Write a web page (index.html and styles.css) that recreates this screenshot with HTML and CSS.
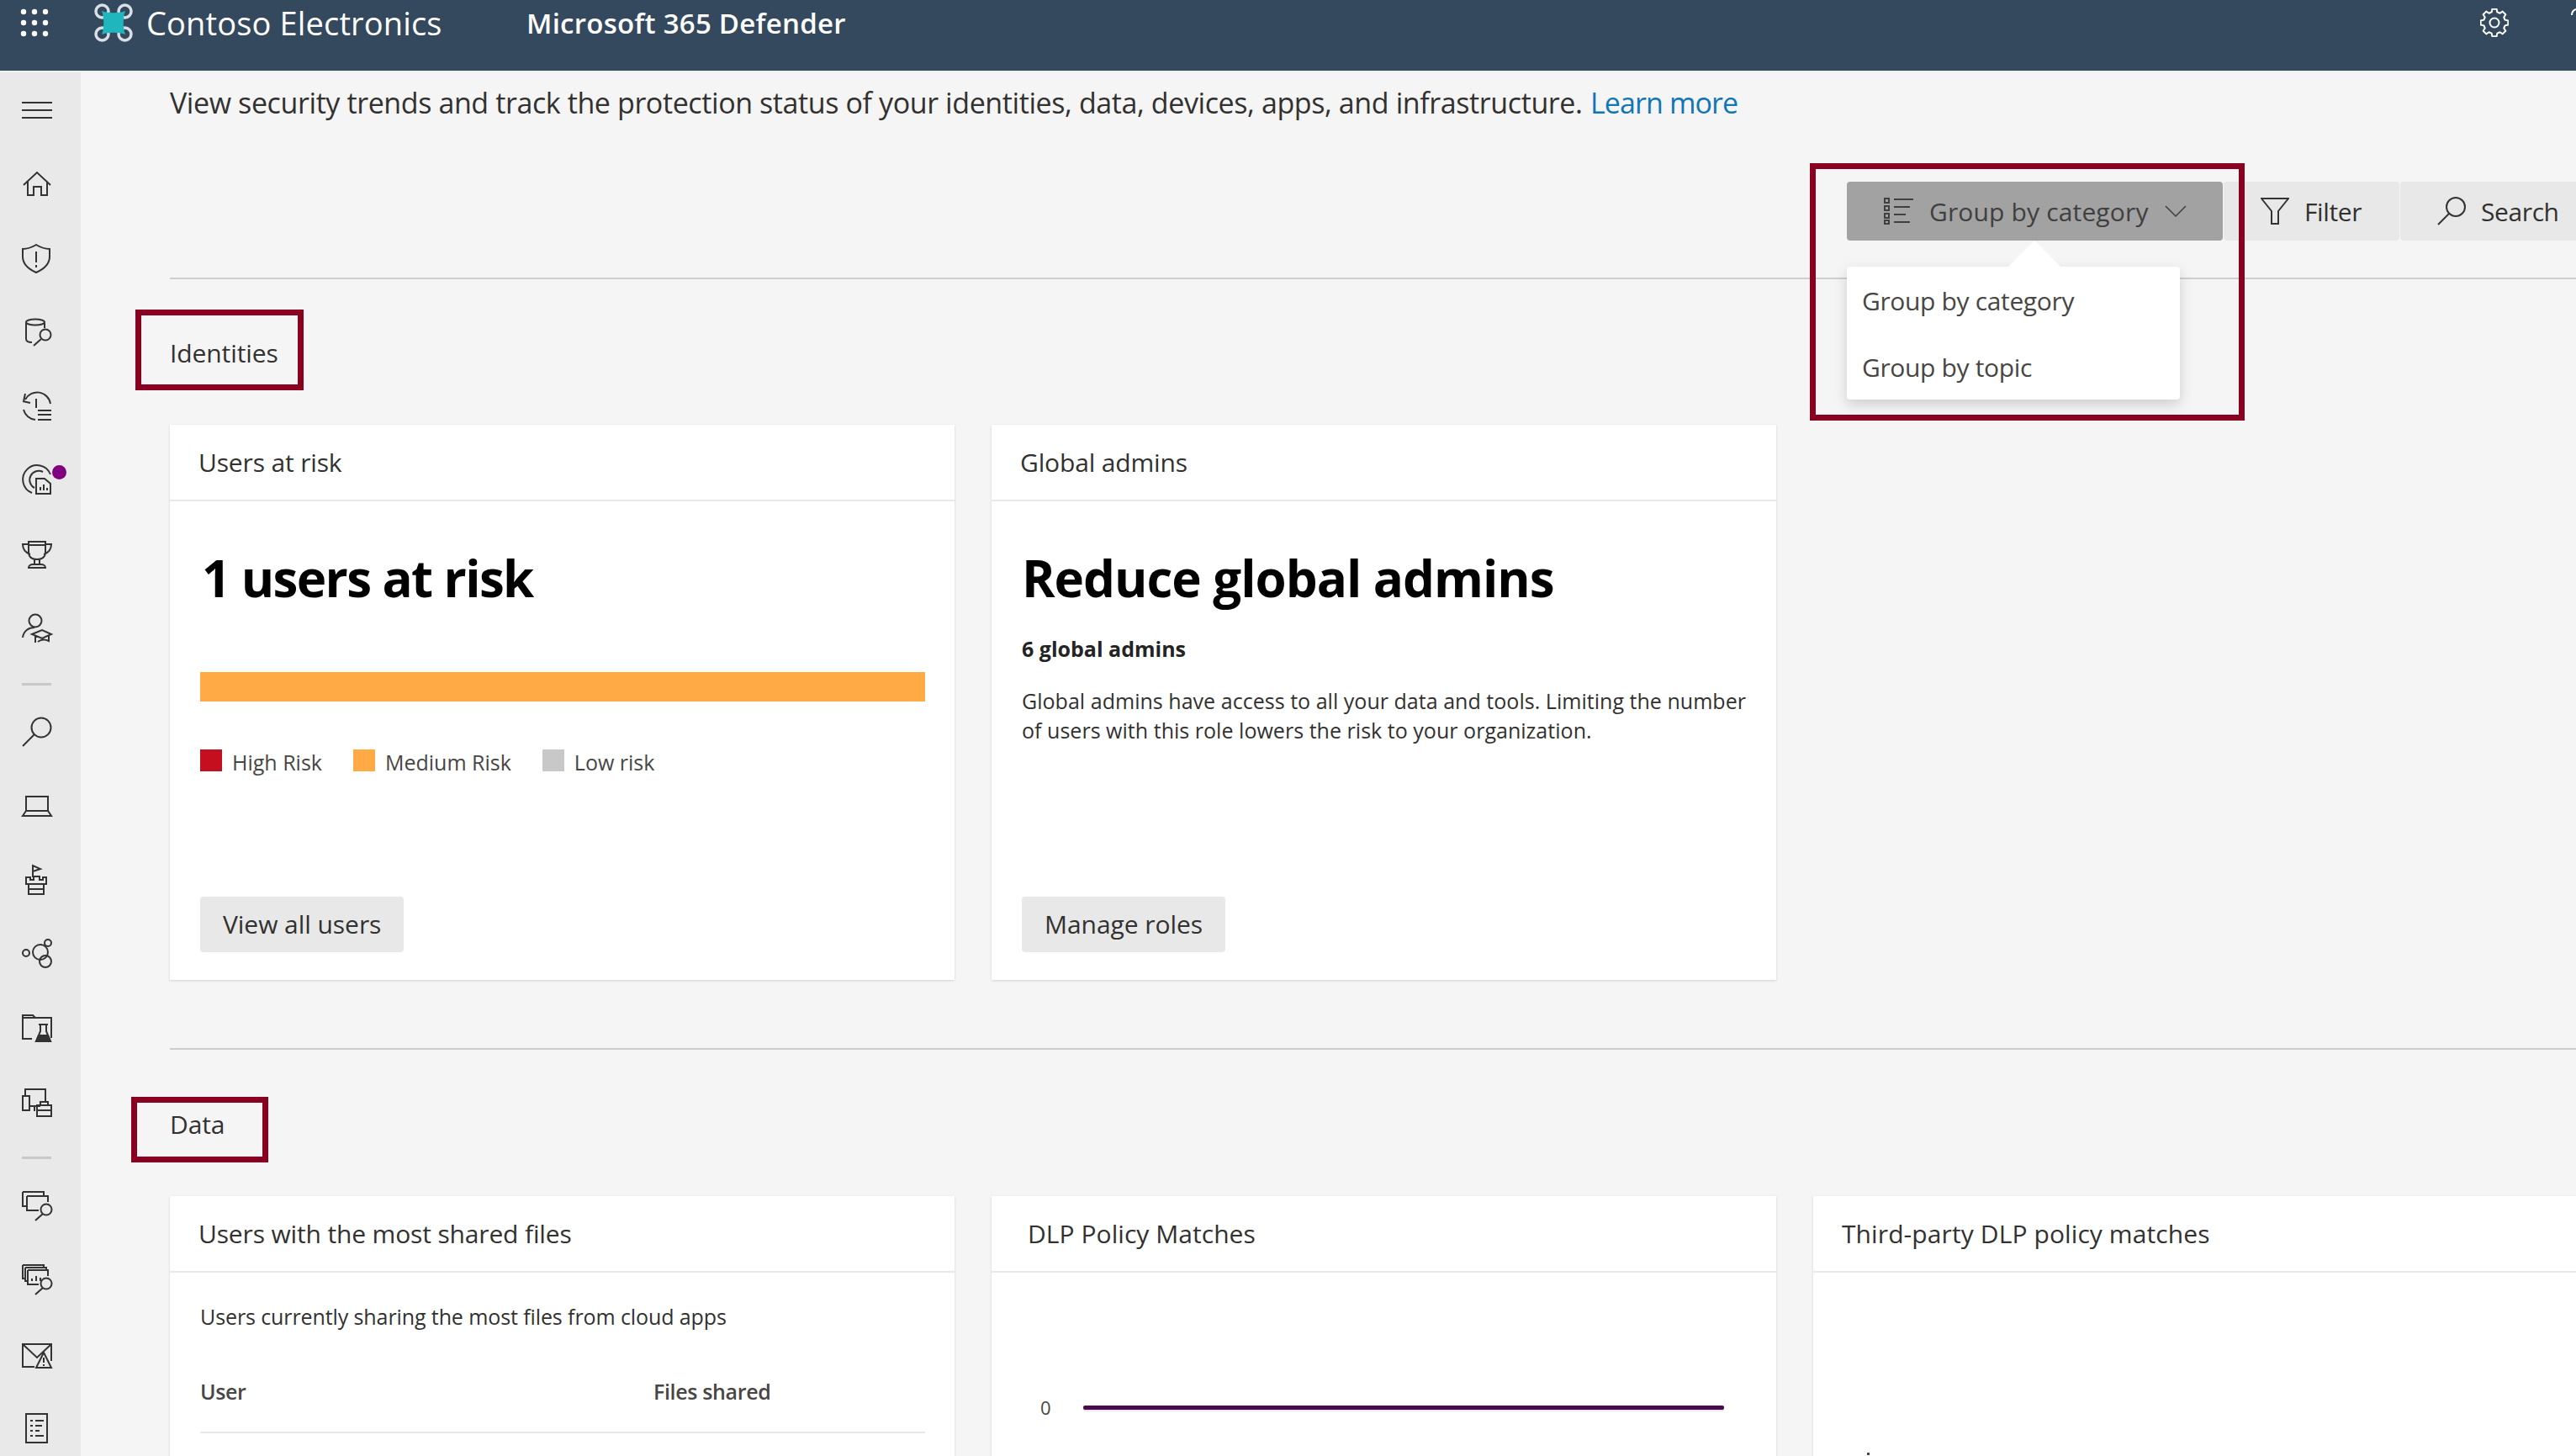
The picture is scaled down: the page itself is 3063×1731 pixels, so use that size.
FILE: index.html
```html
<!DOCTYPE html>
<html lang="en">
<head>
  <meta charset="utf-8">
  <title>Microsoft 365 Defender</title>
  <link rel="stylesheet" href="styles.css">
</head>
<body>
  <div class="topbar">
    <svg class="waffle" width="36" height="36" viewBox="0 0 36 36"><g fill="#fff"><circle cx="5" cy="5" r="3.2"/><circle cx="18" cy="5" r="3.2"/><circle cx="31" cy="5" r="3.2"/><circle cx="5" cy="18" r="3.2"/><circle cx="18" cy="18" r="3.2"/><circle cx="31" cy="18" r="3.2"/><circle cx="5" cy="31" r="3.2"/><circle cx="18" cy="31" r="3.2"/><circle cx="31" cy="31" r="3.2"/></g></svg>
    <svg class="logo" width="46" height="46" viewBox="0 0 46 46"><g fill="none" stroke="#d9dfe4" stroke-width="3.5"><circle cx="9.5" cy="9.5" r="7.5"/><circle cx="36.5" cy="9.5" r="7.5"/><circle cx="9.5" cy="36.5" r="7.5"/><circle cx="36.5" cy="36.5" r="7.5"/></g><path d="M9 9C16 12 30 12 37 9C34 16 34 30 37 37C30 34 16 34 9 37C12 30 12 16 9 9Z" fill="#1fb6bd"/></svg>
    <span class="org-name">Contoso Electronics</span>
    <span class="product-name">Microsoft 365 Defender</span>
    <svg class="gear" width="34" height="34" viewBox="0 0 34 34" fill="none" stroke="#fff" stroke-width="2" stroke-linejoin="round"><polygon points="13.64,4.44 14.42,.7 19.58,.7 20.36,4.44 23.5,5.74 26.7,3.65 30.35,7.3 28.26,10.5 29.56,13.64 33.3,14.42 33.3,19.58 29.56,20.36 28.26,23.5 30.35,26.7 26.7,30.35 23.5,28.26 20.36,29.56 19.58,33.3 14.42,33.3 13.64,29.56 10.5,28.26 7.3,30.35 3.65,26.7 5.74,23.5 4.44,20.36 .7,19.58 .7,14.42 4.44,13.64 5.74,10.5 3.65,7.3 7.3,3.65 10.5,5.74"/><circle cx="17" cy="17" r="5.5"/></svg>
    <svg class="help-edge" width="6" height="10" viewBox="0 0 6 10" fill="none" stroke="#fff" stroke-width="2"><path d="M1 8C1 4 3 2 6 1"/></svg>
  </div>

  <div class="layout">
    <nav class="sidebar">
      <a class="nav-item"><svg class="nav-icon" viewBox="0 0 36 36"><path d="M0 9H36M0 18H36M0 27H36"/></svg></a>
      <a class="nav-item"><svg class="nav-icon" viewBox="0 0 36 36"><path d="M2 19L18 4L34 19M7 15V31H14V21H23V31H30V15"/></svg></a>
      <a class="nav-item"><svg class="nav-icon" viewBox="0 0 36 36"><path d="M17 2C12 5 6 7 1 7V16C1 25 8 31 17 35C26 31 33 25 33 16V7C28 7 22 5 17 2ZM17 10V23M17 26V29"/></svg></a>
      <a class="nav-item"><svg class="nav-icon" viewBox="0 0 36 36"><ellipse cx="16" cy="6" rx="11" ry="3.5"/><path d="M5 7V26C5 29 8 30 12 30M27 7V13M23 26L14 34"/><circle cx="28" cy="21" r="6.5"/></svg></a>
      <a class="nav-item"><svg class="nav-icon" viewBox="0 0 36 36"><path d="M4 10A16 16 0 0 1 34 15M1 12L10 14M4 3L2 12M2 22A16 16 0 0 0 16 34M17 9V20M19 23H35M19 28H35M19 34H35"/></svg></a>
      <a class="nav-item"><svg class="nav-icon" viewBox="0 0 36 36"><path d="M12 33A17 17 0 1 1 34 11M15 27A10 10 0 0 1 25 8M17 16H27L34 22V34H17ZM22 30V26M26 30V23M30 30V27"/></svg><span class="badge"></span></a>
      <a class="nav-item"><svg class="nav-icon" viewBox="0 0 36 36"><path d="M8 3H28V15C28 21 24 24 18 24C12 24 8 21 8 15ZM8 6H1C1 12 4 16 10 18M28 6H35C35 12 32 16 26 18M15 24V30M21 24V30M8 34C8 32 10 30 13 30H23C26 30 28 32 28 34ZM8 7H28"/></svg></a>
      <a class="nav-item"><svg class="nav-icon" viewBox="0 0 36 36"><circle cx="16" cy="9" r="7.5"/><path d="M1 29C2 21 8 17 15 17M12 25L24 20L35 25L24 30ZM16 27V35M32 27V33C28 31 23 31 19 34"/></svg></a>
      <div class="nav-divider"></div>
      <a class="nav-item"><svg class="nav-icon" viewBox="0 0 36 36"><circle cx="23" cy="13" r="11.5"/><path d="M15 21L1 35"/></svg></a>
      <a class="nav-item"><svg class="nav-icon" viewBox="0 0 36 36"><path d="M5 24V7H31V24M5 24H31L35 30H1Z"/></svg></a>
      <a class="nav-item"><svg class="nav-icon" viewBox="0 0 36 36"><path d="M13 15V1L22 5L13 8M5 15H10V18H14V14H21V18H25V15H29V23H5ZM8 23V29M26 23V29M8 29H26V35H8Z"/></svg></a>
      <a class="nav-item"><svg class="nav-icon" viewBox="0 0 36 36"><circle cx="5" cy="17" r="4"/><circle cx="31" cy="5" r="4"/><circle cx="22" cy="16" r="9"/><circle cx="28" cy="27" r="7"/></svg></a>
      <a class="nav-item"><svg class="nav-icon" viewBox="0 0 36 36"><path d="M12 31H1V3H13L16 6H35V30M1 6H16M20 14H31M22 14V22L17 34H34L29 22V14"/><path class="nav-fill" d="M17 34L20 27H31L34 34Z"/></svg></a>
      <a class="nav-item"><svg class="nav-icon" viewBox="0 0 36 36"><path d="M4 12V3H28V18M9 23H22M15 23V29"/><rect x="1" y="11" width="8" height="17"/><rect x="18" y="22" width="17" height="13"/><path d="M22 22V18H31V22M18 28H35"/></svg></a>
      <div class="nav-divider"></div>
      <a class="nav-item"><svg class="nav-icon" viewBox="0 0 36 36"><path d="M1 2H26V7M1 2V19H6M6 7H31V14M6 7V24H20M25 28L16 36"/><circle cx="29" cy="23" r="6.5"/></svg></a>
      <a class="nav-item"><svg class="nav-icon" viewBox="0 0 36 36"><path d="M1 1H26V4M1 1V17H4M4 4H29V7M4 4V20H7M7 7H31V14M7 7V24H20M25 28L16 36M12 20V17M17 20V14M22 20V16"/><circle cx="29" cy="23" r="6.5"/></svg></a>
      <a class="nav-item"><svg class="nav-icon" viewBox="0 -3 36 36"><path d="M15 31H1V4H35V24M1 4L18 20L35 4M26 14L35 32H17ZM26 20V26M26 28V30"/></svg></a>
      <a class="nav-item"><svg class="nav-icon" viewBox="0 -1 36 36"><rect x="5" y="1" width="25" height="34"/><path d="M10 9H13M16 9H26M10 15H13M16 15H24M10 21H13M16 21H21M10 27H13M16 27H26"/></svg></a>
    </nav>

    <main class="main">
      <p class="intro">View security trends and track the protection status of your identities, data, devices, apps, and infrastructure. <a class="link">Learn more</a></p>

      <div class="toolbar">
        <div class="tool tool-active">
          <svg class="tool-icon" width="36" height="32" viewBox="0 0 36 32" fill="none" stroke="#404040" stroke-width="2"><rect x="1" y="1" width="5" height="5"/><rect x="1" y="10" width="5" height="5"/><rect x="1" y="19" width="5" height="5"/><rect x="1" y="27" width="5" height="4"/><path d="M12 2H35M12 11H31M12 20H26M12 29H31"/></svg>
          <span>Group by category</span>
          <svg class="chevron" width="26" height="14" viewBox="0 0 26 14" fill="none" stroke="#404040" stroke-width="1.5"><path d="M1 1L13 13L25 1"/></svg>
          <div class="menu">
            <div class="menu-item">Group by category</div>
            <div class="menu-item">Group by topic</div>
          </div>
          <div class="callout callout-menu"></div>
        </div>
        <div class="tool tool-filter">
          <svg class="tool-icon" width="34" height="32" viewBox="0 0 34 32" fill="none" stroke="#333" stroke-width="2"><path d="M1 1H33L21 16V31H13V16Z"/></svg>
          <span>Filter</span>
        </div>
        <div class="tool tool-search">
          <svg class="tool-icon" width="34" height="34" viewBox="0 0 34 34" fill="none" stroke="#333" stroke-width="2"><circle cx="22" cy="12" r="11"/><path d="M14 20L1 33"/></svg>
          <span>Search</span>
        </div>
      </div>
      <hr class="rule">

      <h2 class="section-title">Identities<span class="callout callout-identities"></span></h2>
      <div class="cards">
        <section class="card">
          <h3 class="card-title">Users at risk</h3>
          <div class="card-body">
            <div class="headline headline-risk">1 users at risk</div>
            <div class="risk-bar"></div>
            <div class="legend">
              <span class="legend-item"><i class="swatch swatch-high"></i>High Risk</span>
              <span class="legend-item"><i class="swatch swatch-medium"></i>Medium Risk</span>
              <span class="legend-item"><i class="swatch swatch-low"></i>Low risk</span>
            </div>
            <a class="btn">View all users</a>
          </div>
        </section>
        <section class="card">
          <h3 class="card-title">Global admins</h3>
          <div class="card-body">
            <div class="headline">Reduce global admins</div>
            <div class="subhead">6 global admins</div>
            <p class="card-text">Global admins have access to all your data and tools. Limiting the number of users with this role lowers the risk to your organization.</p>
            <a class="btn">Manage roles</a>
          </div>
        </section>
      </div>
      <hr class="rule rule-data">

      <h2 class="section-title section-data">Data<span class="callout callout-data"></span></h2>
      <div class="cards">
        <section class="card">
          <h3 class="card-title">Users with the most shared files</h3>
          <div class="card-body card-body-table">
            <p class="card-note">Users currently sharing the most files from cloud apps</p>
            <div class="table-head"><span>User</span><span>Files shared</span></div>
          </div>
        </section>
        <section class="card">
          <h3 class="card-title card-title-dlp">DLP Policy Matches</h3>
          <div class="card-body">
            <div class="chart">
              <span class="chart-label">0</span>
              <div class="chart-line"></div>
            </div>
          </div>
        </section>
        <section class="card">
          <h3 class="card-title card-title-wide">Third-party DLP policy matches</h3>
          <div class="card-body"><i class="axis-tick"></i></div>
        </section>
      </div>
    </main>
  </div>
</body>
</html>
```

FILE: styles.css
```css
* {
  box-sizing: border-box;
}

html, body {
  height: 1731px;
  margin: 0;
  overflow: hidden;
}

body {
  font-family: "Open Sans", "Noto Sans", sans-serif;
  color: #323130;
  background: #f5f5f5;
}

/* top bar */
.topbar {
  position: relative;
  display: flex;
  align-items: center;
  height: 84px;
  padding: 0 0 30px 23px;
  color: #fff;
  background: #35495e;
}

.logo {
  margin-left: 53px;
}

.org-name {
  width: 452px;
  margin-left: 16px;
  font-size: 38px;
  letter-spacing: .15px;
}

.product-name {
  font-size: 33px;
  font-weight: 600;
  letter-spacing: .25px;
}

.gear {
  margin-left: auto;
  margin-right: 80px;
}

.help-edge {
  position: absolute;
  right: 0;
  top: 10px;
}

/* side nav */
.layout {
  display: flex;
  height: 1647px;
  border-top: 2px solid #f0f0f0;
}

.sidebar {
  flex: none;
  width: 96px;
  padding-top: 1px;
  background: #e9e9e9;
}

.nav-item {
  position: relative;
  display: flex;
  align-items: center;
  height: 88px;
  padding-left: 26px;
}

.nav-icon {
  width: 36px;
  height: 36px;
  fill: none;
  stroke: #333;
  stroke-width: 2;
  overflow: visible;
}

.nav-fill {
  fill: #333;
}

.badge {
  position: absolute;
  left: 62px;
  top: 26px;
  width: 17px;
  height: 17px;
  border-radius: 50%;
  background: #800080;
}

.nav-divider {
  width: 35px;
  height: 3px;
  margin: 21px 0 11px 26px;
  background: #c8c8c8;
}

/* main column */
.main {
  flex: 1;
  min-width: 0;
  padding-left: 106px;
  overflow: hidden;
}

.intro {
  margin: 12px 0 0;
  font-size: 34px;
  line-height: 48px;
  letter-spacing: -.4px;
  white-space: nowrap;
}

.link {
  margin-left: 1px;
  letter-spacing: -.9px;
  color: #0f77b6;
}

.toolbar {
  display: flex;
  gap: 1px;
  height: 70px;
  margin: 70px -30px 0 0;
  justify-content: flex-end;
  font-size: 30px;
  letter-spacing: -.4px;
}

.tool {
  position: relative;
  display: flex;
  align-items: center;
  padding-left: 44px;
  border-radius: 4px;
  background: #e8e8e8;
}

.tool-active {
  width: 447px;
  color: #404040;
  letter-spacing: .15px;
  background: #a2a2a2;
}

.tool-filter {
  width: 209px;
}

.tool-search {
  width: 239px;
}

.tool-icon {
  margin-right: 18px;
  flex: none;
}

.chevron {
  margin-left: 19px;
}

/* dropdown */
.menu {
  position: absolute;
  left: 0;
  top: 101px;
  z-index: 2;
  width: 396px;
  height: 158px;
  padding-top: 2px;
  border-radius: 4px;
  color: #484644;
  letter-spacing: -.35px;
  background: #fff;
  box-shadow: 0 6px 16px rgba(0, 0, 0, .16);
}

.menu::before {
  content: "";
  position: absolute;
  left: 192px;
  top: -31px;
  width: 62px;
  height: 31px;
  background: #fff;
  clip-path: polygon(50% 0, 100% 100%, 0 100%);
}

.menu-item {
  height: 79px;
  padding-left: 18px;
  line-height: 78px;
}

/* annotation boxes */
.callout {
  position: absolute;
  border: 7px solid #8a0020;
}

.callout-menu {
  left: -44px;
  top: -22px;
  z-index: 3;
  width: 517px;
  height: 306px;
}

.rule {
  height: 2px;
  margin: 44px 0 0;
  border: 0;
  background: #cdcdcd;
}

.section-title {
  position: relative;
  margin: 68px 0 65px;
  font-size: 30px;
  font-weight: 400;
  line-height: 40px;
  letter-spacing: -.1px;
}

.callout-identities {
  left: -41px;
  top: -32px;
  width: 200px;
  height: 96px;
}

.rule-data {
  margin-top: 81px;
}

.section-data {
  margin-top: 69px;
}

.callout-data {
  left: -46px;
  top: -13px;
  width: 163px;
  height: 78px;
}

/* cards */
.cards {
  display: grid;
  grid-template-columns: repeat(3, 933px);
  gap: 44px;
}

.card {
  display: flex;
  flex-direction: column;
  height: 660px;
  background: #fff;
  box-shadow: 0 1px 3px rgba(0, 0, 0, .14);
}

.card-title {
  flex: none;
  height: 91px;
  margin: 0;
  padding-left: 34px;
  border-bottom: 2px solid #e8e8e8;
  font-size: 30px;
  font-weight: 400;
  line-height: 89px;
  letter-spacing: -.15px;
}

.card-title-dlp {
  padding-left: 43px;
  letter-spacing: .05px;
}

.card-title-wide {
  letter-spacing: .1px;
}

.card-body {
  position: relative;
  display: flex;
  flex: 1;
  flex-direction: column;
  align-items: flex-start;
  padding: 51px 36px 33px;
}

.headline {
  font-size: 60px;
  font-weight: 700;
  line-height: 80px;
  letter-spacing: -1px;
  color: #000;
}

.headline-risk {
  margin-left: 2px;
  letter-spacing: -1.6px;
}

.risk-bar {
  width: 862px;
  height: 35px;
  margin-top: 72px;
  background: #ffaa44;
}

.legend {
  display: flex;
  gap: 37px;
  margin-top: 57px;
  font-size: 25px;
  line-height: 30px;
  letter-spacing: 0;
  color: #484644;
}

.legend-item {
  display: flex;
  align-items: center;
}

.swatch {
  width: 26px;
  height: 26px;
  margin: -4px 12px 0 0;
}

.swatch-high {
  background: #c50f1f;
}

.swatch-medium {
  background: #ffaa44;
}

.swatch-low {
  background: #c8c8c8;
}

.btn {
  display: block;
  height: 66px;
  margin-top: auto;
  padding: 0 27px;
  border-radius: 4px;
  font-size: 30px;
  line-height: 66px;
  letter-spacing: -.05px;
  background: #e8e8e8;
}

.subhead {
  margin-top: 29px;
  font-size: 25px;
  font-weight: 700;
  line-height: 30px;
  color: #242424;
}

.card-text {
  width: 875px;
  margin: 30px 0 0;
  font-size: 25px;
  line-height: 35px;
  letter-spacing: .03px;
}

.card-body-table {
  padding-top: 37px;
}

.card-note {
  margin: 0;
  font-size: 25px;
  line-height: 30px;
  letter-spacing: -.1px;
}

.table-head {
  display: grid;
  grid-template-columns: 539px 1fr;
  width: 862px;
  margin-top: 59px;
  padding-bottom: 33px;
  border-bottom: 2px solid #e8e8e8;
  font-size: 25px;
  font-weight: 600;
  line-height: 30px;
  letter-spacing: -.35px;
  color: #484644;
}

/* flat line chart */
.chart {
  display: flex;
  align-items: center;
  width: 100%;
  margin-top: 94px;
  padding-left: 22px;
  font-size: 22px;
  line-height: 30px;
  color: #484644;
}

.chart-label {
  width: 51px;
}

.chart-line {
  width: 762px;
  height: 5px;
  border-radius: 2px;
  background: #4b0b4b;
  box-shadow: 0 2px 0 #e8e8e8;
}

.axis-tick {
  position: absolute;
  left: 64px;
  top: 214px;
  width: 3px;
  height: 3px;
  background: #484644;
}
```
